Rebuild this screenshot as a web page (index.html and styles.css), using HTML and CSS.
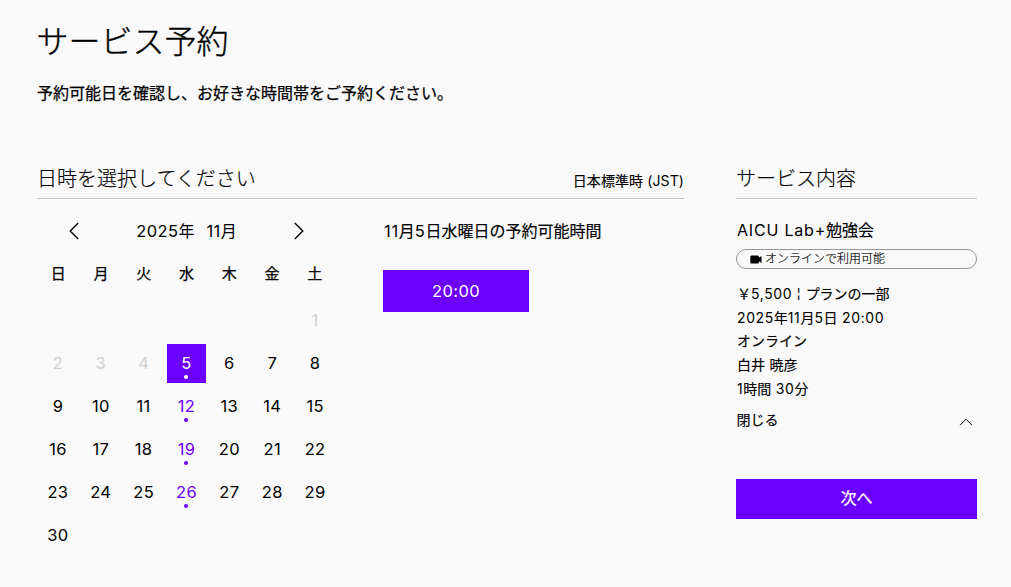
FILE: index.html
```html
<!DOCTYPE html>
<html lang="ja">
<head>
<meta charset="utf-8">
<title>サービス予約</title>
<link rel="stylesheet" href="styles.css">
</head>
<body>
<main class="page">
  <header class="intro">
    <h1 class="title">サービス予約</h1>
    <p class="lead">予約可能日を確認し、お好きな時間帯をご予約ください。</p>
  </header>
  <div class="columns">
    <section class="schedule">
      <div class="section-head">
        <h2 class="section-title">日時を選択してください</h2>
        <span class="timezone">日本標準時 <span class="num">(JST)</span></span>
      </div>
      <div class="schedule-body">
        <div class="calendar">
          <div class="month-nav">
            <svg class="arrow" viewBox="0 0 10 18"><path d="M9.2 1 1.2 9l8 8"/></svg>
            <span class="month"><span><span class="num">2025</span>年</span><span><span class="num">11</span>月</span></span>
            <svg class="arrow" viewBox="0 0 10 18"><path d="M.8 1l8 8-8 8"/></svg>
          </div>
          <div class="weekdays"><span>日</span><span>月</span><span>火</span><span>水</span><span>木</span><span>金</span><span>土</span></div>
          <div class="days">
            <span class="day past first">1</span>
            <span class="day past">2</span><span class="day past">3</span><span class="day past">4</span><span class="day open selected">5</span><span class="day">6</span><span class="day">7</span><span class="day">8</span>
            <span class="day">9</span><span class="day">10</span><span class="day">11</span><span class="day open">12</span><span class="day">13</span><span class="day">14</span><span class="day">15</span>
            <span class="day">16</span><span class="day">17</span><span class="day">18</span><span class="day open">19</span><span class="day">20</span><span class="day">21</span><span class="day">22</span>
            <span class="day">23</span><span class="day">24</span><span class="day">25</span><span class="day open">26</span><span class="day">27</span><span class="day">28</span><span class="day">29</span>
            <span class="day">30</span>
          </div>
        </div>
        <div class="slots">
          <h3 class="slots-title"><span class="num">11</span>月<span class="num">5</span>日水曜日の予約可能時間</h3>
          <button class="slot">20:00</button>
        </div>
      </div>
    </section>
    <aside class="summary">
      <div class="section-head"><h2 class="section-title">サービス内容</h2></div>
      <h3 class="service"><span class="latin">AICU Lab+</span>勉強会</h3>
      <div class="badge">
        <svg class="camera" viewBox="0 0 12 9"><path d="M1.5.5h6Q9 .5 9 2v.8L11.5 1v7L9 6.2V7q0 1.5-1.5 1.5h-6Q.3 8.5.3 7V2Q.3.5 1.5.5z"/></svg>
        <span>オンラインで利用可能</span>
      </div>
      <ul class="details">
        <li>￥<span class="num">5,500 <span class="bar">¦</span> </span>プランの一部</li>
        <li><span class="num">2025</span>年<span class="num">11</span>月<span class="num">5</span>日<span class="num"> 20:00</span></li>
        <li>オンライン</li>
        <li>白井<span class="num"> </span>暁彦</li>
        <li><span class="num">1</span>時間<span class="num"> 30</span>分</li>
      </ul>
      <div class="toggle"><span>閉じる</span><svg class="chevron" viewBox="0 0 14 8"><path d="M1 7.2l6-6 6 6"/></svg></div>
      <button class="next">次へ</button>
    </aside>
  </div>
</main>
</body>
</html>
```
FILE: styles.css
```css
* { box-sizing: border-box; }
body {
  margin: 0;
  background: #f9f9f9;
  color: #000;
  font-family: Inter, "Noto Sans CJK JP", sans-serif;
  font-size: 16px;
}
h1, h2, h3, p, ul { margin: 0; padding: 0; font-weight: 400; }
ul { list-style: none; }
button { border: 0; padding: 0; background: #6c00ff; color: #fff; font: inherit; }
.num, .latin { -webkit-text-stroke: 0; }
.page { height: 587px; padding: 18px 34px 0 37px; overflow: hidden; }
.title {
  font-size: 32px;
  font-weight: 300;
  line-height: 48px;
  text-indent: -.5px;
  -webkit-text-stroke: .35px #000;
}
.lead { margin-top: 15px; line-height: 24px; -webkit-text-stroke: .25px #000; }
.columns { display: flex; justify-content: space-between; margin-top: 58px; }
.schedule { width: 647px; }
.summary { width: 241px; }
.section-head {
  display: flex;
  justify-content: space-between;
  height: 36px;
  border-bottom: 1px solid #c7c7c7;
}
.section-title { font-size: 20px; font-weight: 300; line-height: 32px; -webkit-text-stroke: .15px #000; }
.timezone { font-size: 14px; line-height: 36px; letter-spacing: .1px; -webkit-text-stroke: .15px #000; }
.schedule-body { display: flex; gap: 46px; }
.calendar { width: 300px; }
.month-nav {
  display: flex;
  align-items: center;
  justify-content: space-between;
  height: 24px;
  margin-top: 20px;
  padding: 0 33px 0 32px;
}
.month { display: flex; gap: 12px; line-height: 24px; }
.month .num { font-size: 16.5px; letter-spacing: .4px; }
.arrow { width: 10px; height: 18px; }
.arrow path, .chevron path { fill: none; stroke: #000; stroke-width: 1.4; }
.weekdays, .days { display: grid; grid-template-columns: repeat(7, 1fr); text-align: center; }
.weekdays {
  height: 24px;
  margin: 19px 0 0 0;
  padding-right: 1px;
  font-size: 15px;
  line-height: 24px;
  -webkit-text-stroke: .25px #000;
}
.days { grid-auto-rows: 42.86px; margin-top: 13.4px; place-items: center; }
.day {
  position: relative;
  width: 39px;
  height: 39px;
  padding-right: 1px;
  font-size: 16.5px;
  line-height: 39px;
  letter-spacing: .3px;
}
.first { grid-column: 7; }
.past { color: #d0d0d0; }
.open { color: #6c00ff; }
.open::after {
  content: "";
  position: absolute;
  left: 17px;
  bottom: 4px;
  width: 4px;
  height: 4px;
  border-radius: 50%;
  background: currentColor;
}
.selected { background: #6c00ff; color: #fff; }
.slots { padding-top: 20px; }
.slots-title { padding-left: 1px; font-size: 16px; line-height: 24px; -webkit-text-stroke: .15px #000; }
.slots-title .num { font-size: 16.5px; letter-spacing: .7px; }
.slot { display: block; width: 146px; height: 42px; margin-top: 27px; font-size: 16.5px; letter-spacing: .4px; }
.service { margin-top: 19px; padding-left: 1px; font-size: 16px; line-height: 24px; -webkit-text-stroke: .15px #000; }
.latin { letter-spacing: .8px; }
.badge {
  display: flex;
  align-items: center;
  gap: 3px;
  height: 20px;
  margin-top: 7px;
  padding-left: 13px;
  border: 1px solid #969696;
  border-radius: 10px;
  font-size: 12px;
  line-height: 18px;
  font-weight: 300;
  -webkit-text-stroke: .15px #000;
}
.camera { width: 12px; height: 9px; }
.details { margin-top: 13px; padding-left: 1px; font-size: 14px; line-height: 23.7px; -webkit-text-stroke: .15px #000; }
.details .num { letter-spacing: .6px; }
.toggle {
  display: flex;
  align-items: center;
  justify-content: space-between;
  height: 22px;
  margin-top: 7px;
  padding: 0 4px 0 .5px;
  font-size: 14px;
  -webkit-text-stroke: .15px #000;
}
.chevron { width: 14px; height: 8px; margin-top: 6px; }
.chevron path { stroke-width: 1; }
.next { display: block; width: 100%; height: 40px; margin-top: 49px; line-height: 38px; padding-bottom: 1px; -webkit-text-stroke: .25px #fff; }
```
